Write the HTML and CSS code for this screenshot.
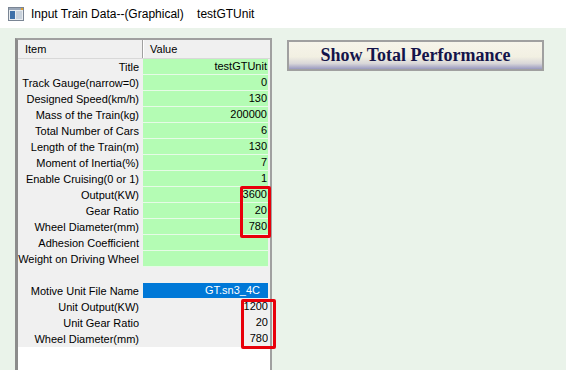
FILE: index.html
```html
<!DOCTYPE html>
<html lang="en">

<head>
    <meta charset="utf-8">
    <title>Input Train Data--(Graphical)</title>
    <link rel="stylesheet" href="styles.css">
</head>

<body>
    <header class="titlebar">
        <svg class="appicon" width="16" height="14" viewBox="0 0 16 14">
            <rect x="0.5" y="0.5" width="15" height="13" fill="#e8ecf0" stroke="#7a8594"/>
            <rect x="1" y="1" width="14" height="2" fill="#9aa7b8"/>
            <rect x="2" y="4" width="5" height="8" fill="#3d6fa8"/>
            <rect x="8" y="4" width="6" height="8" fill="#c9d2dc"/>
            <rect x="13" y="1" width="2" height="2" fill="#e0a030"/>
        </svg>
        <span class="caption">Input Train Data--(Graphical)&nbsp;&nbsp;&nbsp;&nbsp;testGTUnit</span>
    </header>

    <main class="client">
        <section class="grid">
            <div class="head">
                <div class="hcell">Item</div>
                <div class="hcell">Value</div>
            </div>
            <div class="rows">
                <div class="row"><span class="label">Title</span><span class="val">testGTUnit</span></div>
                <div class="row"><span class="label">Track Gauge(narrow=0)</span><span class="val">0</span></div>
                <div class="row"><span class="label">Designed Speed(km/h)</span><span class="val">130</span></div>
                <div class="row"><span class="label">Mass of the Train(kg)</span><span class="val">200000</span></div>
                <div class="row"><span class="label">Total Number of Cars</span><span class="val">6</span></div>
                <div class="row"><span class="label">Length of the Train(m)</span><span class="val">130</span></div>
                <div class="row"><span class="label">Moment of Inertia(%)</span><span class="val">7</span></div>
                <div class="row"><span class="label">Enable Cruising(0 or 1)</span><span class="val">1</span></div>
                <div class="row"><span class="label">Output(KW)</span><span class="val">3600</span></div>
                <div class="row"><span class="label">Gear Ratio</span><span class="val">20</span></div>
                <div class="row"><span class="label">Wheel Diameter(mm)</span><span class="val">780</span></div>
                <div class="row"><span class="label">Adhesion Coefficient</span><span class="val"></span></div>
                <div class="row"><span class="label">Weight on Driving Wheel</span><span class="val"></span></div>
                <div class="row plain"><span class="label"></span><span class="val"></span></div>
                <div class="row plain"><span class="label">Motive Unit File Name</span><span class="val selected">GT.sn3_4C</span></div>
                <div class="row plain"><span class="label">Unit Output(KW)</span><span class="val">1200</span></div>
                <div class="row plain"><span class="label">Unit Gear Ratio</span><span class="val">20</span></div>
                <div class="row plain"><span class="label">Wheel Diameter(mm)</span><span class="val">780</span></div>
            </div>
            <div class="mark mark-a"></div>
            <div class="mark mark-b"></div>
        </section>

        <button class="perf">Show Total Performance</button>
    </main>
</body></html>
```

FILE: styles.css
```css
body {
    margin: 0;
    background: #eaf3ea;
    font-family: "Liberation Sans", Arial, sans-serif;
    font-size: 11px;
    color: #000;
    overflow: hidden;
}

.titlebar {
    height: 28px;
    background: #fff;
    display: flex;
    align-items: center;
    padding-left: 8px;
    gap: 7px;
}

.caption {
    font-size: 12px;
    color: #000;
    white-space: pre;
}

.client {
    display: flex;
    align-items: flex-start;
    padding: 10px 0 0 15px;
    height: 332px;
}

.grid {
    position: relative;
    width: 252px;
    height: 340px;
    background: #fff;
    border-left: 3px solid #8c8c8c;
    border-top: 2px solid #a0a0a0;
    border-right: 2px solid #a0a0a0;
}

.head {
    display: grid;
    grid-template-columns: 124px 126px;
    height: 18px;
    background: #f0f0f0;
    border-bottom: 1px solid #d8d8d8;
}

.hcell {
    padding-left: 7px;
    line-height: 18px;
}

.hcell + .hcell {
    border-left: 1px solid #a0a0a0;
    box-shadow: inset 1px 0 0 #fff;
    padding-left: 7px;
}

.rows {
    display: flex;
    flex-direction: column;
}

.row {
    display: grid;
    grid-template-columns: 125px 125px;
    height: 16px;
    background: #f0f0f0;
}

.label {
    text-align: right;
    padding-right: 4px;
    line-height: 16px;
    white-space: nowrap;
}

.val {
    background: #b4fcb4;
    border-bottom: 1px solid #e6fbe6;
    text-align: right;
    padding-right: 1px;
    line-height: 15px;
    white-space: nowrap;
    overflow: hidden;
}

.plain .val {
    background: #f0f0f0;
    border-bottom-color: #f0f0f0;
    padding-right: 0;
}

.plain .val.selected {
    background: #0078d7;
    color: #fff;
    padding-right: 8px;
}

.mark {
    position: absolute;
    border: 3px solid #e8000b;
    border-radius: 2px;
}

.mark-a {
    left: 222px;
    top: 146px;
    width: 25px;
    height: 46px;
}

.mark-b {
    left: 223px;
    top: 259px;
    width: 29px;
    height: 44px;
}

.perf {
    margin-left: 15px;
    margin-top: 2px;
    width: 257px;
    height: 31px;
    border: 2px solid #a0a0a0;
    background: linear-gradient(#f6f4ea 0%, #f2f0e2 55%, #d8d6d8 80%, #9a9ac0 100%);
    font-family: "Liberation Serif", serif;
    font-weight: bold;
    font-size: 18px;
    color: #14144a;
    padding: 0;
}
```
